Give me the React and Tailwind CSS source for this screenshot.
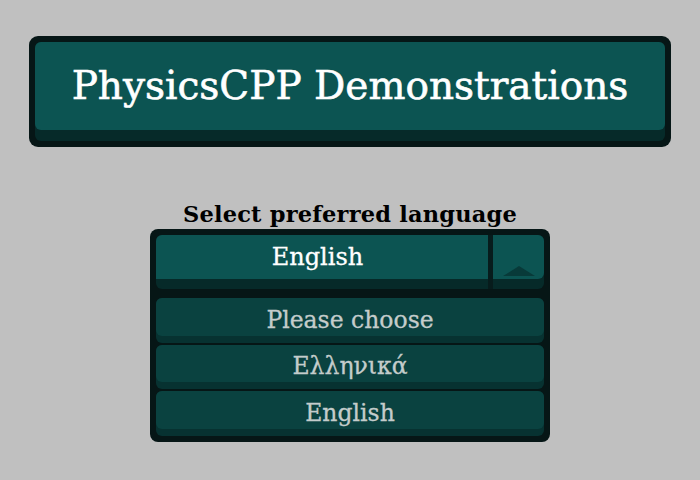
export default function App() {
  const font = { fontFamily: '"DejaVu Serif", serif' };
  return (
    <div className="w-[700px] h-[480px] bg-[#c0c0c0] flex flex-col items-center overflow-hidden" style={font}>
      <div className="mt-[36px] w-[642px] rounded-[9px] bg-[#061616] p-[6px]">
        <div className="rounded-[6px] bg-[#062a29] pb-[11px]">
          <div className="h-[88px] rounded-[6px] bg-[#0c5452] flex items-center justify-center text-white text-[39px] leading-none pb-[2px] [-webkit-text-stroke:0.6px_currentColor]">
            PhysicsCPP Demonstrations
          </div>
        </div>
      </div>
      <div className="mt-[54px] h-[27px] text-black text-[22.5px] font-bold leading-[27px] tracking-[0.2px]">
        Select preferred language
      </div>
      <div className="mt-[1px] w-[400px] rounded-[8px] bg-[#061616] p-[6px]">
        <div className="flex h-[54px] rounded-[6px] overflow-hidden bg-[#062a29]">
          <div className="flex-1 h-[44px] bg-[#0c5452] flex items-center justify-center pr-[9px] text-white text-[24px] leading-none [-webkit-text-stroke:0.3px_currentColor]">
            English
          </div>
          <div className="w-[5px] bg-[#071c1c]" />
          <div className="w-[51px] h-[44px] bg-[#0c5452] rounded-br-[6px] flex items-end justify-center pb-[3px]">
            <svg width="32" height="10" viewBox="0 0 32 10">
              <polygon points="0,10 16,0 32,10" fill="#083a39" />
            </svg>
          </div>
        </div>
        <div className="mt-[9px] flex flex-col gap-[2px]">
          {[
            ["Please choose", 45],
            ["Ελληνικά", 44],
            ["English", 45],
          ].map(([t, h]) => (
            <div key={t} className="relative rounded-[6px] bg-[#073231] pb-[7px]" style={{ height: h }}>
              <div className="h-full rounded-[6px] bg-[#0a4240]" />
              <div className="absolute inset-0 flex items-center justify-center text-[#c4cccb] text-[23.5px] leading-none [-webkit-text-stroke:0.3px_currentColor]">
                {t}
              </div>
            </div>
          ))}
        </div>
      </div>
    </div>
  );
}
